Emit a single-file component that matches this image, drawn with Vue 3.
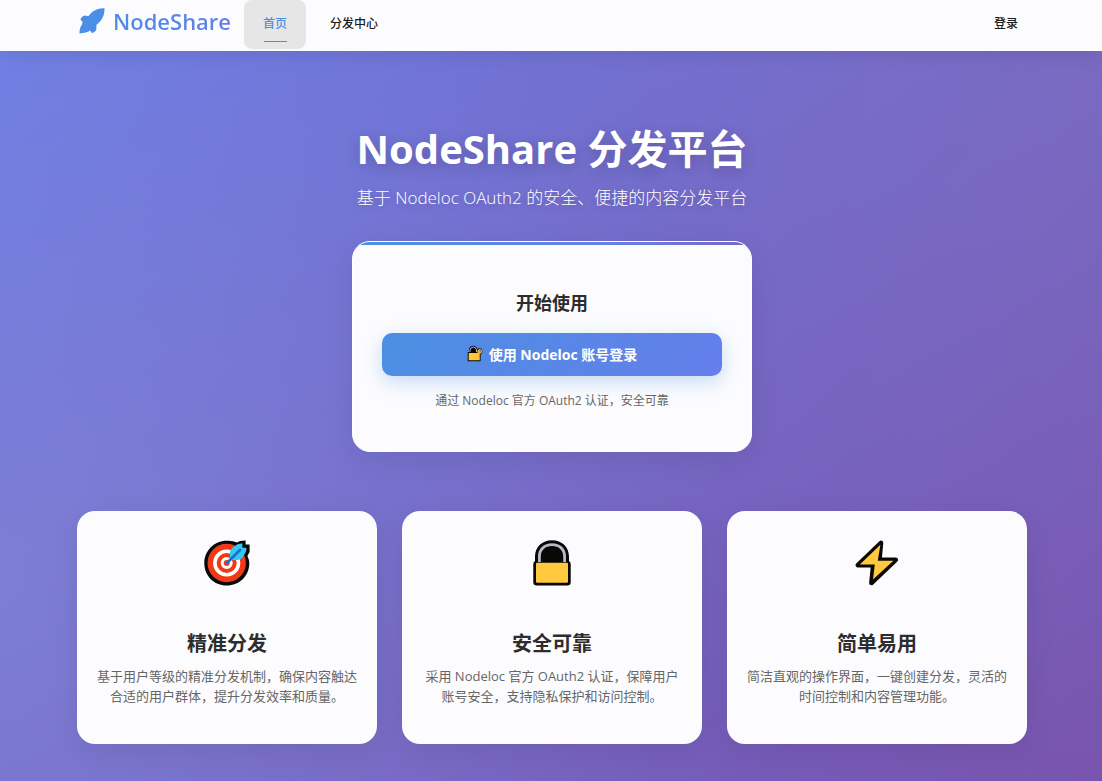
<script setup>
const features = [
  { icon: 'target', title: '精准分发', text: '基于用户等级的精准分发机制，确保内容触达合适的用户群体，提升分发效率和质量。' },
  { icon: 'lock', title: '安全可靠', text: '采用 Nodeloc 官方 OAuth2 认证，保障用户账号安全，支持隐私保护和访问控制。' },
  { icon: 'bolt', title: '简单易用', text: '简洁直观的操作界面，一键创建分发，灵活的时间控制和内容管理功能。' }
]
</script>

<template>
  <div class="page">
    <header class="topbar">
      <nav class="bar">
        <a class="brand" href="#">
          <svg class="rocket" viewBox="0 0 26 26" aria-hidden="true">
            <path d="M25.5 0.2 C18 0 13 3.2 9.4 8.3 L6 7.4 Q3.6 7.6 2.1 10 L1.4 11.4 L3.6 14 L2.8 17 C1.2 19 0.7 21 0.4 25.4 C5.5 25.3 8.8 24.6 11 22.6 L13.2 25.3 L16 23.5 Q17.2 22.7 17.3 21.5 L17.5 16.8 C22.8 12.5 25.6 8 25.5 0.2 Z" />
          </svg>
          <span>NodeShare</span>
        </a>
        <a class="link active" href="#">首页</a>
        <a class="link" href="#">分发中心</a>
        <a class="link login" href="#">登录</a>
      </nav>
    </header>

    <main class="content">
      <section class="hero">
        <h1>NodeShare 分发平台</h1>
        <p>基于 Nodeloc OAuth2 的安全、便捷的内容分发平台</p>
      </section>

      <section class="start">
        <h2>开始使用</h2>
        <button type="button" class="signin">
          <svg viewBox="0 0 16 17" aria-hidden="true">
            <path d="M2 7 V5 Q2.4 .8 6.3 .8 Q9.8 .8 10.4 4.3 Q12 2.8 14 3.6 Q16 5 15.3 7.6 Q14.8 9 13.6 9.3 V16.2 H.7 V7 Z" fill="#080808" />
            <path d="M3 7 V5.2 Q3.4 2 6.3 2 Q9 2 9.5 5 V7" fill="none" stroke="#b9bdc4" />
            <path d="M1.7 8 H10.4 L10.8 5 L13 4 L15 5.6 L14.4 8 L12.6 8.7 V15.2 H1.7 Z" fill="#ffc83d" />
            <path d="M10.6 5.2 L13 4 L15 5.6 L14.4 8 L12.5 8.7 L12.7 15 H11.8 V9 Q10.5 7.5 10.6 5.2 Z" fill="#f5a51c" />
            <circle cx="13.4" cy="5.8" r=".6" fill="#4c3510" />
          </svg>
          <span>使用 Nodeloc 账号登录</span>
        </button>
        <p>通过 Nodeloc 官方 OAuth2 认证，安全可靠</p>
      </section>

      <section class="features">
        <article v-for="item in features" :key="item.title" class="feature">
          <svg v-if="item.icon === 'target'" viewBox="0 0 46 46" aria-hidden="true">
            <path d="M22.7 .8 Q29 .5 33 2.6 L36 1 L41.6 .4 V4.6 H45.6 V12 L43.4 16 Q45.4 20 45.3 23 C45.3 36 35.5 45.5 22.7 45.5 C10 45.5 .3 36 .3 23 C.3 11 10 .8 22.7 .8 Z" fill="#080808" />
            <circle cx="22.7" cy="23" r="19.2" fill="#f03a17" />
            <circle cx="22.7" cy="23" r="11.8" fill="none" stroke="#fff" stroke-width="3.6" />
            <circle cx="22.7" cy="23" r="4.5" fill="#f03a17" stroke="#fff" stroke-width="3" />
            <path d="M26 19.6 V12 Q26.4 9.8 28 8.2 L33 4.6 Q37.4 3 38.4 3.6 V7.8 H42.2 Q43 9 41.8 12 L38.6 17.4 Q36.6 20 33 20 H28 Z" fill="#35c9f2" />
            <path d="M23 23 L36 10" fill="none" stroke="#1670cc" stroke-width="2.8" stroke-linecap="round" />
          </svg>
          <svg v-else-if="item.icon === 'lock'" viewBox="0 0 46 46" aria-hidden="true">
            <path d="M4.3 24 Q4.3 22 6 21 V17 C6 7 13 .3 23 .3 C33 .3 40 7 40 17 V21 Q41.7 22 41.7 24 V42 Q41.7 45.5 38.5 45.5 H7.5 Q4.3 45.5 4.3 42 Z" fill="#080808" />
            <path d="M10.4 22 V16.5 C10.4 9.2 15.5 4.7 23 4.7 C30.5 4.7 35.6 9.2 35.6 16.5 V22" fill="none" stroke="#b8bbc1" stroke-width="2.8" />
            <rect x="7" y="22.7" width="32" height="20" rx="1.2" fill="#ffc83d" />
          </svg>
          <svg v-else viewBox="0 0 46 46" aria-hidden="true">
            <path d="M27 2.8 L3.8 25.2 H19.2 L17.4 43 L41.8 19.8 H25.4 Z" fill="#080808" stroke="#080808" stroke-width="4.6" stroke-linejoin="round" />
            <path d="M26.4 4.8 L5.8 24.4 H20.8 L19 39.6 L39.4 20.8 H23.8 Z" fill="#ffc83d" />
          </svg>
          <h3>{{ item.title }}</h3>
          <p>{{ item.text }}</p>
        </article>
      </section>
    </main>
  </div>
</template>

<style>
body {
  margin: 0;
}
</style>

<style scoped>
* {
  box-sizing: border-box;
}

.page {
  min-height: 100vh;
  font-family: "Open Sans", "Noto Sans", "Noto Sans CJK SC", sans-serif;
  color: #2d2d2d;
  background:
    radial-gradient(circle at 0% 75%, rgba(150, 148, 212, 0.36), transparent 60%),
    radial-gradient(circle at 100% 10%, rgba(140, 125, 190, 0.25), transparent 60%),
    linear-gradient(135deg, #6b7ee6 0%, #7853ad 100%);
}

h1, h2, h3, p {
  margin: 0;
}

.topbar {
  height: 51px;
  padding-left: 2px;
  background: #fcfcfe;
  box-shadow: 0 2px 20px rgba(0, 0, 0, 0.1);
}

.bar {
  display: flex;
  max-width: 950px;
  height: 100%;
  margin: 0 auto;
}

.brand {
  display: flex;
  align-items: center;
  gap: 8px;
  width: 167px;
  height: 42px;
  padding-left: 2px;
  font-size: 22px;
  font-weight: 600;
  text-decoration: none;
}

.brand span {
  background: linear-gradient(135deg, #4a90e2, #667eea);
  background-clip: text;
  color: transparent;
}

.rocket {
  width: 26px;
  height: 26px;
  fill: #4a8fe5;
}

.link {
  position: relative;
  height: 49px;
  padding: 0 19px;
  border-radius: 8px;
  color: #1c1c1c;
  font-size: 12px;
  font-weight: 500;
  line-height: 48px;
  text-decoration: none;
}

.link + .link {
  margin-left: 5px;
}

.active {
  color: #4a90e2;
  background: #e6e6e7;
}

.active::after {
  content: "";
  position: absolute;
  right: 19px;
  bottom: 7px;
  left: 20px;
  height: 1px;
  background: #667eea;
}

.link.login {
  margin-left: auto;
  padding: 0 9px;
}

.content {
  max-width: 952px;
  margin: 0 auto;
  padding: 69px 0 37px 2px;
}

.hero {
  color: #fff;
  text-align: center;
}

.hero h1 {
  font-size: 40px;
  font-weight: 700;
  line-height: 58px;
  text-shadow: 0 4px 15px rgba(0, 0, 0, 0.2);
}

.hero p {
  margin-top: 7px;
  font-size: 17px;
  font-weight: 300;
  line-height: 26px;
  text-shadow: 0 2px 8px rgba(0, 0, 0, 0.2);
}

.start {
  position: relative;
  overflow: hidden;
  max-width: 400px;
  margin: 30px auto 59px;
  padding: 48px 29px 40px;
  border: 1px solid #fff;
  border-radius: 18px;
  background: #fcfcfe;
  box-shadow: 0 8px 30px rgba(0, 0, 0, 0.08);
  text-align: center;
}

.start::before {
  content: "";
  position: absolute;
  top: 0;
  right: 0;
  left: 0;
  height: 3px;
  background: linear-gradient(90deg, #4a90e2, #667eea 65%, #7668c4);
}

.start h2 {
  font-size: 18px;
  line-height: 26px;
}

.signin {
  display: flex;
  align-items: center;
  justify-content: center;
  gap: 6px;
  width: 100%;
  height: 43px;
  margin-top: 17px;
  padding: 0 0 2px;
  border: 0;
  border-radius: 10px;
  background: linear-gradient(135deg, #4a90e2, #667eea);
  box-shadow: 0 6px 20px rgba(74, 144, 226, 0.3);
  color: #fff;
  font-family: inherit;
  font-size: 14px;
  font-weight: 700;
}

.signin svg {
  width: 16px;
  height: 17px;
}

.start p {
  margin-top: 15px;
  color: #666;
  font-size: 12px;
  line-height: 20px;
}

.features {
  display: grid;
  grid-template-columns: repeat(3, 1fr);
  gap: 25px;
}

.feature {
  padding: 29px 20px 38px;
  border-radius: 18px;
  background: #fcfcfe;
  box-shadow: 0 8px 30px rgba(0, 0, 0, 0.08);
  text-align: center;
}

.feature svg {
  display: block;
  width: 46px;
  height: 46px;
  margin: 0 auto 43px;
}

.feature h3 {
  font-size: 20px;
  line-height: 30px;
}

.feature p {
  margin-top: 7px;
  color: #666;
  font-size: 13px;
  line-height: 20px;
}
</style>
